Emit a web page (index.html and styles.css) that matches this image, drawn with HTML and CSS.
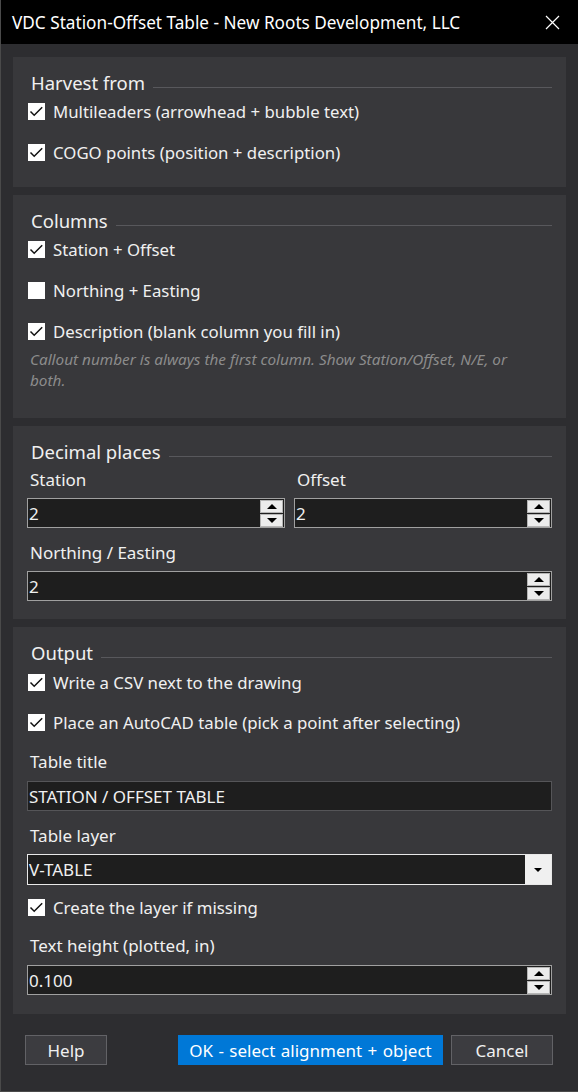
FILE: index.html
```html
<!DOCTYPE html>
<html>
<head>
<meta charset="utf-8">
<link rel="stylesheet" href="styles.css">
</head>
<body>
<div class="window">
  <div class="titlebar">
    <span class="title">VDC Station-Offset Table - New Roots Development, LLC</span>
    <svg class="close" width="15" height="15" viewBox="0 0 15 15"><path d="M1 1 L14 14 M14 1 L1 14" stroke="#fff" stroke-width="1.2" fill="none"/></svg>
  </div>
  <div class="content">
    <section class="panel p1">
      <div class="hdr"><span>Harvest from</span><i class="rule"></i></div>
      <div class="rows">
        <label class="chk"><span class="box"><svg viewBox="0 0 17 17" width="17" height="17"><path d="M2.5 8.5 L6.2 12.2 L14.2 4.2" stroke="#111" stroke-width="1.5" fill="none"/></svg></span>Multileaders (arrowhead + bubble text)</label>
        <label class="chk"><span class="box"><svg viewBox="0 0 17 17" width="17" height="17"><path d="M2.5 8.5 L6.2 12.2 L14.2 4.2" stroke="#111" stroke-width="1.5" fill="none"/></svg></span>COGO points (position + description)</label>
      </div>
    </section>
    <section class="panel p2">
      <div class="hdr"><span>Columns</span><i class="rule"></i></div>
      <div class="rows">
        <label class="chk"><span class="box"><svg viewBox="0 0 17 17" width="17" height="17"><path d="M2.5 8.5 L6.2 12.2 L14.2 4.2" stroke="#111" stroke-width="1.5" fill="none"/></svg></span>Station + Offset</label>
        <label class="chk"><span class="box"></span>Northing + Easting</label>
        <label class="chk"><span class="box"><svg viewBox="0 0 17 17" width="17" height="17"><path d="M2.5 8.5 L6.2 12.2 L14.2 4.2" stroke="#111" stroke-width="1.5" fill="none"/></svg></span>Description (blank column you fill in)</label>
      </div>
      <p class="hint">Callout number is always the first column. Show Station/Offset, N/E, or both.</p>
    </section>
    <section class="panel p3">
      <div class="hdr"><span>Decimal places</span><i class="rule"></i></div>
      <div class="pair">
        <div class="field">
          <div class="lbl">Station</div>
          <div class="input spin"><span class="val">2</span><span class="spinbtn"><b class="up"></b><b class="dn"></b></span></div>
        </div>
        <div class="field">
          <div class="lbl">Offset</div>
          <div class="input spin"><span class="val">2</span><span class="spinbtn"><b class="up"></b><b class="dn"></b></span></div>
        </div>
      </div>
      <div class="field f2">
        <div class="lbl">Northing / Easting</div>
        <div class="input spin"><span class="val">2</span><span class="spinbtn"><b class="up"></b><b class="dn"></b></span></div>
      </div>
    </section>
    <section class="panel p4">
      <div class="hdr"><span>Output</span><i class="rule"></i></div>
      <div class="rows">
        <label class="chk"><span class="box"><svg viewBox="0 0 17 17" width="17" height="17"><path d="M2.5 8.5 L6.2 12.2 L14.2 4.2" stroke="#111" stroke-width="1.5" fill="none"/></svg></span>Write a CSV next to the drawing</label>
        <label class="chk"><span class="box"><svg viewBox="0 0 17 17" width="17" height="17"><path d="M2.5 8.5 L6.2 12.2 L14.2 4.2" stroke="#111" stroke-width="1.5" fill="none"/></svg></span>Place an AutoCAD table (pick a point after selecting)</label>
      </div>
      <div class="field f3">
        <div class="lbl">Table title</div>
        <div class="input text"><span class="val">STATION / OFFSET TABLE</span></div>
      </div>
      <div class="field f4">
        <div class="lbl">Table layer</div>
        <div class="input combo"><span class="val">V-TABLE</span><span class="drop"><b class="dn"></b></span></div>
      </div>
      <label class="chk c5"><span class="box"><svg viewBox="0 0 17 17" width="17" height="17"><path d="M2.5 8.5 L6.2 12.2 L14.2 4.2" stroke="#111" stroke-width="1.5" fill="none"/></svg></span>Create the layer if missing</label>
      <div class="field f5">
        <div class="lbl">Text height (plotted, in)</div>
        <div class="input spin"><span class="val">0.100</span><span class="spinbtn"><b class="up"></b><b class="dn"></b></span></div>
      </div>
    </section>
    <div class="buttons">
      <button class="btn help">Help</button>
      <button class="btn ok">OK - select alignment + object</button>
      <button class="btn cancel">Cancel</button>
    </div>
  </div>
</div>
</body>
</html>
```
FILE: styles.css
```css
* { box-sizing: border-box; }
html, body { margin: 0; padding: 0; }
body {
  width: 578px; height: 1092px; overflow: hidden;
  background: #2d2d30;
  font-family: "Noto Sans", "Open Sans", sans-serif;
  color: #f0f0f0;
}
.window {
  width: 578px; height: 1092px;
  border-left: 1px solid #4a4a4a;
  border-bottom: 1px solid #4a4a4a;
}
.titlebar {
  height: 44px; background: #000;
  display: flex; align-items: center; justify-content: space-between;
  padding: 0 18px 0 11px;
}
.title { font-size: 17.2px; color: #fff; }
.close { display: block; }
.content { padding: 13px 12px 0 12px; display: flex; flex-direction: column; gap: 8px; }
.panel {
  background: #38383b;
  padding: 14px 14px 0 14px;
  display: flex; flex-direction: column;
}
.p1 { height: 130px; }
.p2 { height: 223px; }
.p3 { height: 193px; }
.p4 { height: 387px; }
.hdr {
  height: 24px; display: flex; align-items: center; gap: 8px;
  padding-left: 4px; font-size: 18.5px; line-height: 24px;
}
.rule { flex: 1; height: 1px; background: #58585c; margin-top: 9px; }
.rows { display: flex; flex-direction: column; gap: 17px; margin-top: 4px; }
.chk {
  height: 24px; display: flex; align-items: center; gap: 8px;
  padding-left: 1px; font-size: 16.8px;
}
.box {
  width: 17px; height: 17px; background: #fff; display: block;
  flex: none;
}
.box svg { display: block; }
.hint {
  margin: 6px 0 0 0; padding-left: 3px; padding-right: 20px;
  font-size: 15.3px; line-height: 21px; font-style: italic; color: #8c8c8c;
}
.pair { display: flex; gap: 9px; margin-top: 6px; }
.pair .field { flex: 1; }
.lbl { font-size: 17px; line-height: 20px; padding-left: 3px; margin-bottom: 8px; }
.f2 { margin-top: 15px; }
.input {
  height: 30px; background: #1e1e1e; border: 1px solid #a0a0a0;
  display: flex; align-items: center; position: relative;
  font-size: 17px;
}
.val { padding-left: 1px; flex: 1; }
.spinbtn {
  width: 23px; height: 27px; margin-right: 1px;
  display: flex; flex-direction: column; gap: 1px;
}
.spinbtn b {
  flex: 1; background: #ececec; border: 1px solid #b5b5b5;
  display: flex; align-items: center; justify-content: center;
}
.spinbtn b::before, .drop b::before {
  content: ""; width: 0; height: 0;
  border-left: 5px solid transparent; border-right: 5px solid transparent;
}
.up::before { border-bottom: 5px solid #000; }
.dn::before { border-top: 5px solid #000; }
.p4 .rows { gap: 16px; margin-top: 5px; }
.f3 { margin-top: 18px; }
.f3 .lbl { margin-bottom: 9px; }
.text { border-color: #555558; }
.f4 { margin-top: 15px; }
.combo { height: 31px; border-color: #e8e8e8; }
.drop {
  width: 26px; height: 29px; background: #f0f0f0;
  display: flex; align-items: center; justify-content: center;
}
.drop b { display: flex; }
.drop b::before { border-left-width: 4px; border-right-width: 4px; border-top-width: 4px; }
.c5 { margin-top: 10px; }
.f5 { margin-top: 17px; }
.f5 .lbl { margin-bottom: 9px; }
.buttons { display: flex; margin-top: 13px; padding-left: 12px; }
.btn {
  height: 30px; font-family: inherit; font-size: 17px; color: #f0f0f0;
  background: #3c3c40; border: 1px solid #626266; padding: 0;
}
.help { width: 82px; }
.ok { width: 265px; margin-left: 71px; background: #0078d7; border-color: #0078d7; color: #fff; word-spacing: 1px; }
.cancel { width: 102px; margin-left: 8px; }
```
